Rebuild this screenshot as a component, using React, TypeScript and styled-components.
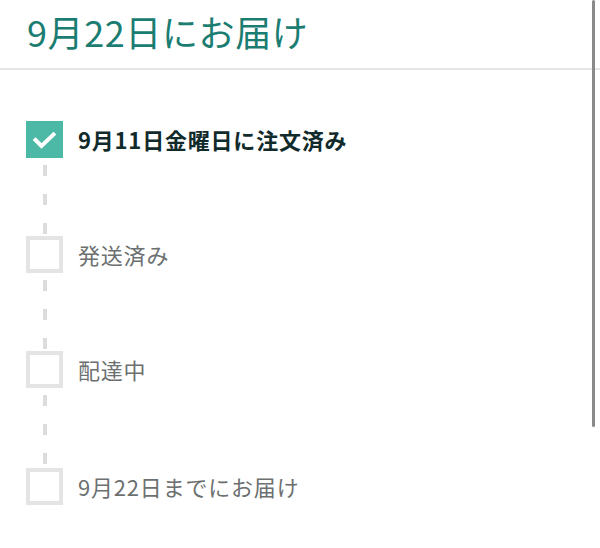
import styled, { createGlobalStyle } from 'styled-components';

interface Step {
	label: string;
	done: boolean;
}

const steps: Step[] = [
	{ label: '9月11日金曜日に注文済み', done: true },
	{ label: '発送済み', done: false },
	{ label: '配達中', done: false },
	{ label: '9月22日までにお届け', done: false },
];

const GlobalStyle = createGlobalStyle`
	html, body {
		margin: 0;
		padding: 0;
		background: #ffffff;
	}
	body {
		font-family: 'Noto Sans CJK JP', 'Noto Sans', sans-serif;
	}
`;

const App = () => {
	return (
		<Page>
			<GlobalStyle />
			<Header>
				<Title>9月22日にお届け</Title>
			</Header>
			<Tracker>
				{steps.map((step, i) => (
					<StepRow key={step.label}>
						<Rail>
							<Box done={step.done}>
								{step.done && (
									<svg width='37' height='37' viewBox='0 0 37 37'>
										<path
											d='M9.5 19 L15.5 25 L27.5 13.5'
											fill='none'
											stroke='#ffffff'
											strokeWidth='4'
											strokeLinecap='square'
										/>
									</svg>
								)}
							</Box>
							{i < steps.length - 1 && <Connector tall={i === steps.length - 2} />}
						</Rail>
						<Label done={step.done}>{step.label}</Label>
					</StepRow>
				))}
			</Tracker>
			<ScrollThumb />
		</Page>
	);
};

export default App;

const Page = styled.div`
	position: relative;
	width: 600px;
	height: 548px;
	overflow: hidden;
	background: #fff;
`;

const Header = styled.div`
	height: 70px;
	border-bottom: 2px solid #e6e6e6;
	display: flex;
	align-items: center;
	padding-left: 27px;
	box-sizing: border-box;
`;

const Title = styled.h1`
	margin: 0;
	margin-top: -6px;
	font-size: 36px;
	font-weight: 400;
	color: #1b7d72;
	letter-spacing: 0.6px;
`;

const Tracker = styled.div`
	display: flex;
	flex-direction: column;
	padding: 51px 0 0 26px;
`;

const StepRow = styled.div`
	display: flex;
	align-items: flex-start;
	gap: 15px;
`;

const Rail = styled.div`
	display: flex;
	flex-direction: column;
	align-items: center;
	width: 37px;
`;

const Box = styled.div<{ done: boolean }>`
	width: 37px;
	height: 37px;
	box-sizing: border-box;
	background: ${(p) => (p.done ? '#4cb9a6' : '#ffffff')};
	border: ${(p) => (p.done ? 'none' : '4px solid #e4e4e4')};
	display: flex;
	align-items: center;
	justify-content: center;
`;

const Connector = styled.div<{ tall: boolean }>`
	width: 4px;
	height: ${(p) => (p.tall ? 80 : 78)}px;
	background: repeating-linear-gradient(
		to bottom,
		transparent 0px,
		transparent 7px,
		#dcdcdc 7px,
		#dcdcdc 18px,
		transparent 18px,
		transparent 29px
	);
`;

const Label = styled.span<{ done: boolean }>`
	line-height: 37px;
	font-size: 22px;
	font-weight: ${(p) => (p.done ? 700 : 400)};
	color: ${(p) => (p.done ? '#112a2b' : '#6c7070')};
	letter-spacing: 0.8px;
	white-space: nowrap;
`;

const ScrollThumb = styled.div`
	position: absolute;
	top: 0;
	right: 5px;
	width: 3px;
	height: 427px;
	background: #8a8a8a;
	border-radius: 1.5px;
`;
